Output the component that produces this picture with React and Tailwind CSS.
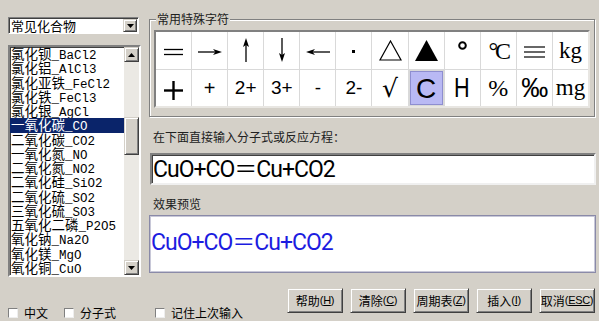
import React from "react";

const ROWS = [
  "氯化钡_BaCl2",
  "氯化铝_AlCl3",
  "氯化亚铁_FeCl2",
  "氯化铁_FeCl3",
  "氯化银_AgCl",
  "一氧化碳_CO",
  "二氧化碳_CO2",
  "一氧化氮_NO",
  "二氧化氮_NO2",
  "二氧化硅_SiO2",
  "二氧化硫_SO2",
  "三氧化硫_SO3",
  "五氧化二磷_P2O5",
  "氧化钠_Na2O",
  "氧化镁_MgO",
  "氧化铜_CuO",
];

const raised =
  "bg-[#d4d0c8] border border-t-[#d4d0c8] border-l-[#d4d0c8] border-r-[#404040] border-b-[#404040] shadow-[inset_1px_1px_0_#ffffff,inset_-1px_-1px_0_#808080]";

const sunken =
  "border-2 border-t-[#808080] border-l-[#808080] border-r-white border-b-white";

function TriUp() {
  return (
    <svg width="7" height="4" viewBox="0 0 7 4">
      <polygon points="3.5,0 7,4 0,4" fill="#000" />
    </svg>
  );
}
function TriDown() {
  return (
    <svg width="7" height="4" viewBox="0 0 7 4">
      <polygon points="0,0 7,0 3.5,4" fill="#000" />
    </svg>
  );
}

function Select() {
  return (
    <div className={`h-[17px] w-[131px] bg-white flex items-center ${sunken} border-[1px] shadow-[inset_1px_1px_0_#404040]`}>
      <span className="flex-1 pl-[2px] text-[13px] leading-[15px] font-['Noto_Sans_CJK_SC',sans-serif]">
        常见化合物
      </span>
      <div className={`w-[14px] h-[13px] mr-[1px] flex items-center justify-center ${raised}`}>
        <TriDown />
      </div>
    </div>
  );
}

function ListBox() {
  return (
    <div className={`mt-[11px] h-[232px] w-[133px] bg-white flex ${sunken} shadow-[inset_1px_1px_0_#404040]`}>
      <div className="flex-1 flex flex-col overflow-hidden">
        {ROWS.map((r, i) => {
          const [cn, en] = r.split("_");
          return (
            <div
              key={r}
              className={`h-[14.25px] shrink-0 pl-[1px] text-[13px] leading-[13px] whitespace-nowrap font-['Noto_Sans_CJK_SC',sans-serif] ${
                i === 5 ? "bg-[#0a246a] text-white" : "text-black"
              }`}
            >
              <span className="text-[13.5px]">{cn}</span>
              <span className="text-[12.5px] font-['Liberation_Mono',monospace]">_{en}</span>
            </div>
          );
        })}
      </div>
      <div className="w-[15px] flex flex-col bg-[#ebe9e4]">
        <div className={`h-[15px] flex items-center justify-center ${raised}`}>
          <TriUp />
        </div>
        <div className="h-[55px]" />
        <div className={`h-[38px] ${raised}`} />
        <div className="flex-1" />
        <div className={`h-[15px] flex items-center justify-center ${raised}`}>
          <TriDown />
        </div>
      </div>
    </div>
  );
}

function HArrow({ left }) {
  return (
    <svg width="24" height="8" viewBox="0 0 24 8" style={{ transform: left ? "scaleX(-1)" : "none" }}>
      <line x1="0" y1="4" x2="19" y2="4" stroke="#000" strokeWidth="1.3" />
      <polygon points="24,4 15,1 17.5,4 15,7" fill="#000" />
    </svg>
  );
}
function VArrow({ down }) {
  return (
    <svg width="8" height="24" viewBox="0 0 8 24" style={{ transform: down ? "scaleY(-1)" : "none" }}>
      <line x1="4" y1="5" x2="4" y2="24" stroke="#000" strokeWidth="1.3" />
      <polygon points="4,0 1,9 4,7 7,9" fill="#000" />
    </svg>
  );
}

const serif = "font-['Liberation_Serif',serif]";
const sans = "font-['Liberation_Sans',sans-serif]";

const CELLS = [
  <svg width="19" height="8" viewBox="0 0 19 8" className="mt-[3px]">
    <line x1="0" y1="1.5" x2="19" y2="1.5" stroke="#000" strokeWidth="1.3" />
    <line x1="0" y1="6.5" x2="19" y2="6.5" stroke="#000" strokeWidth="1.3" />
  </svg>,
  <div className="mt-[3px]"><HArrow /></div>,
  <VArrow />,
  <VArrow down />,
  <div className="mt-[3px]"><HArrow left /></div>,
  <div className="w-[3px] h-[3px] bg-black mt-[2px]" />,
  <svg width="23" height="21" viewBox="0 0 23 21">
    <polygon points="11.5,1 22,20 1,20" fill="none" stroke="#000" strokeWidth="1.2" />
  </svg>,
  <svg width="23" height="21" viewBox="0 0 23 21">
    <polygon points="11.5,0 23,21 0,21" fill="#000" />
  </svg>,
  <svg width="9" height="9" viewBox="0 0 9 9" className="-mt-[10px]">
    <circle cx="4.5" cy="4.5" r="3.3" fill="none" stroke="#000" strokeWidth="2" />
  </svg>,
  <span className={`${serif} text-[24px] leading-none tracking-[-3px] mt-[2px]`}>°C</span>,
  <svg width="21" height="12" viewBox="0 0 21 12" className="mt-[3px]">
    <line x1="0" y1="1" x2="21" y2="1" stroke="#000" strokeWidth="1.2" />
    <line x1="0" y1="6" x2="21" y2="6" stroke="#000" strokeWidth="1.2" />
    <line x1="0" y1="11" x2="21" y2="11" stroke="#000" strokeWidth="1.2" />
  </svg>,
  <span className={`${serif} text-[23px] leading-none mt-[1px]`}>kg</span>,

  <svg width="19" height="19" viewBox="0 0 19 19" className="mt-[6px]">
    <line x1="0" y1="9.5" x2="19" y2="9.5" stroke="#000" strokeWidth="2.4" />
    <line x1="9.5" y1="0" x2="9.5" y2="19" stroke="#000" strokeWidth="2.4" />
  </svg>,
  <span className={`${sans} text-[20px] leading-none`}>+</span>,
  <span className={`${sans} text-[19px] leading-none`}>2+</span>,
  <span className={`${sans} text-[19px] leading-none`}>3+</span>,
  <span className={`${sans} text-[19px] leading-none`}>-</span>,
  <span className={`${sans} text-[19px] leading-none`}>2-</span>,
  <span className="font-['DejaVu_Sans',sans-serif] text-[25px] leading-none mt-[2px]">√</span>,
  <span className={`${sans} text-[28px] leading-none mt-[2px]`}>C</span>,
  <span className={`${sans} text-[27px] leading-none mt-[2px] scale-x-[0.8]`}>H</span>,
  <span className={`${serif} text-[24px] leading-none mt-[1px]`}>%</span>,
  <span className={`${sans} text-[27px] leading-none font-medium mt-[1px] tracking-[-1px]`}>‰</span>,
  <span className={`${serif} text-[23px] leading-none -mt-[1px]`}>mg</span>,
];

function SymbolGrid() {
  return (
    <div className="ml-[4px] mt-[10px] w-[436px] h-[78px] border-2 border-t-[#808080] border-l-[#808080] border-r-[#e8e6e2] border-b-[#e8e6e2] bg-[#d9d9d9]">
      <div className="grid grid-cols-12 grid-rows-2 gap-[1px] w-full h-full">
        {CELLS.map((c, i) => (
          <div
            key={i}
            className={`flex items-center justify-center overflow-hidden ${
              i === 19 ? "bg-[#b9b9f4] shadow-[inset_0_0_0_1px_#8e8ed0] m-[1px]" : "bg-white"
            }`}
          >
            {c}
          </div>
        ))}
      </div>
    </div>
  );
}

function Btn({ label, k }) {
  return (
    <div className={`w-[56px] h-[25px] flex items-center justify-center text-[12px] leading-none ${raised}`}>
      <span>{label}</span>
      <span className={`${sans} text-[11px] tracking-[-0.3px]`}>
        (<span className="underline">{k}</span>)
      </span>
    </div>
  );
}

function Check({ label, className }) {
  return (
    <div className={`flex items-center ${className}`}>
      <div className="w-[10px] h-[10px] bg-white border border-t-[#808080] border-l-[#808080] border-r-[#eeeeee] border-b-[#eeeeee]" />
      <span className="ml-[6px] text-[12px] leading-[12px]">{label}</span>
    </div>
  );
}

const eqFont = "font-['Roboto','Noto_Sans_CJK_SC',sans-serif] text-[23px] leading-none tracking-[-1px]";

export default function App() {
  return (
    <div className="w-[599px] h-[321px] bg-[#d4d0c8] overflow-hidden flex flex-col text-black font-['Noto_Sans_CJK_SC',sans-serif]">
      <div className="flex h-[283px]">
        <div className="w-[149px] pl-[8px] pt-[17px] flex flex-col">
          <Select />
          <ListBox />
        </div>
        <div className="flex flex-col w-[448px]">
          <div className="relative mt-[19px] w-[446px] h-[98px] border border-[#808080] shadow-[inset_1px_1px_0_#ffffff,1px_1px_0_#ffffff]">
            <span className="absolute left-[6px] -top-[8px] px-[1px] bg-[#d4d0c8] text-[12px] leading-[14px] text-[#202020]">
              常用特殊字符
            </span>
            <SymbolGrid />
          </div>
          <div className="mt-[13px] ml-[4px] text-[12px] leading-[14px] text-[#202020]">
            在下面直接输入分子式或反应方程：
          </div>
          <div className="mt-[9px] ml-[1px] w-[446px] h-[32px] bg-white border-2 border-t-[#808080] border-l-[#808080] border-r-[#f0f0f0] border-b-[#f0f0f0] shadow-[inset_1px_1px_0_#404040] flex items-center">
            <span className={`pl-[1px] ${eqFont}`}>CuO+CO＝Cu+CO2</span>
          </div>
          <div className="mt-[12px] ml-[4px] text-[12px] leading-[14px] text-[#202020]">效果预览</div>
          <div className="mt-[4px] w-[447px] h-[58px] bg-white border border-[#8a8aa8] shadow-[inset_0_0_0_1px_#c8c8d8] flex items-center">
            <span className={`pl-[1px] ${eqFont} text-[#1c1ce0] -mt-[3px]`}>CuO+CO＝Cu+CO2</span>
          </div>
        </div>
      </div>
      <div className="flex items-start flex-1">
        <div className="flex pt-[24px] pl-[8px]">
          <Check label="中文" />
          <Check label="分子式" className="ml-[16px]" />
          <Check label="记住上次输入" className="ml-[39px]" />
        </div>
        <div className="ml-auto pt-[5px] pr-[4px] flex gap-[7px]">
          <Btn label="帮助" k="H" />
          <Btn label="清除" k="C" />
          <Btn label="周期表" k="Z" />
          <Btn label="插入" k="I" />
          <Btn label="取消" k="ESC" />
        </div>
      </div>
    </div>
  );
}
